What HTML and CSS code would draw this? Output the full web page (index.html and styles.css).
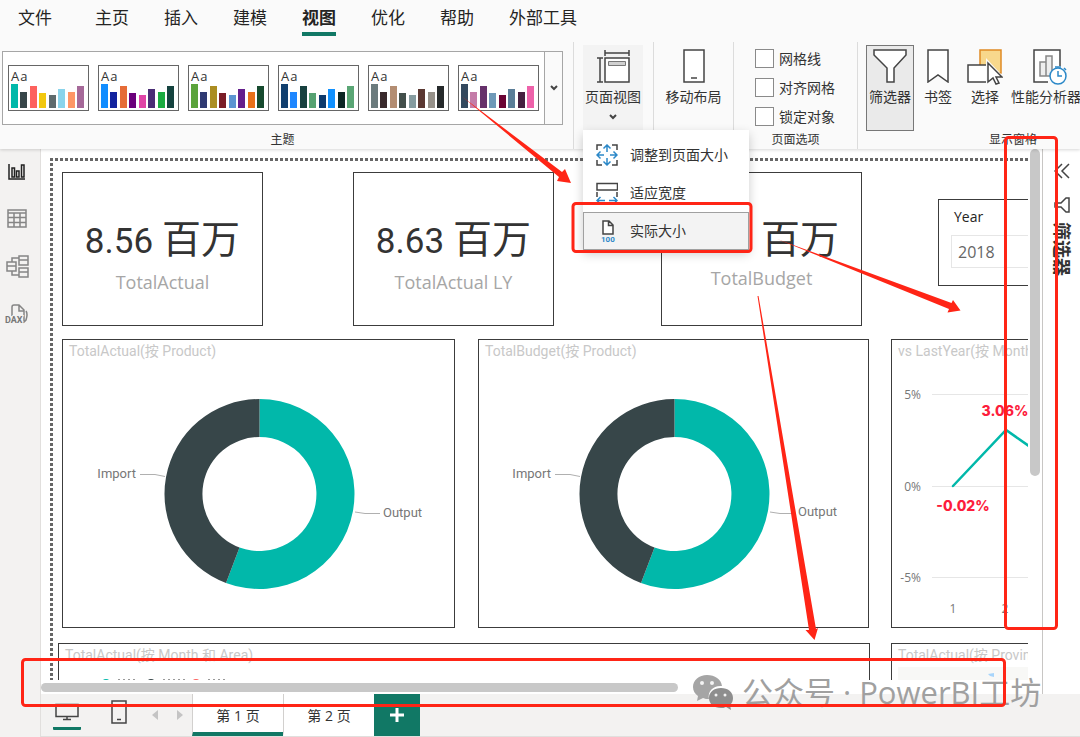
FILE: index.html
```html
<!DOCTYPE html>
<html lang="zh-CN">
<head>
<meta charset="utf-8">
<title>报表视图</title>
<link rel="stylesheet" href="styles.css">
</head>
<body>
<div class="app">
  <header class="top">
    <nav class="tabs">
      <a class="tab tab-file" href="#">文件</a>
      <a class="tab" href="#">主页</a>
      <a class="tab" href="#">插入</a>
      <a class="tab" href="#">建模</a>
      <a class="tab tab-active" href="#">视图</a>
      <a class="tab" href="#">优化</a>
      <a class="tab" href="#">帮助</a>
      <a class="tab" href="#">外部工具</a>
    </nav>

    <div class="ribbon">
      <section class="group group-themes">
        <div class="group-body">
          <div class="gallery">
            <button class="theme" aria-label="主题 1"><span class="aa">Aa</span>
              <svg class="bars" viewBox="0 0 75 24"><path fill="#01b8aa" d="M0 0h7v24H0z"/><path fill="#374649" d="M9 8h7v16H9z"/><path fill="#fd625e" d="M19 2h7v22h-7z"/><path fill="#f2c80f" d="M28 9h7v15h-7z"/><path fill="#5f6b6d" d="M38 11h7v13h-7z"/><path fill="#8ad4eb" d="M47 5h7v19h-7z"/><path fill="#fe9666" d="M57 8h7v16h-7z"/><path fill="#a66999" d="M66 2h7v22h-7z"/></svg></button>
            <button class="theme" aria-label="主题 2"><span class="aa">Aa</span>
              <svg class="bars" viewBox="0 0 75 24"><path fill="#118dff" d="M0 0h7v24H0z"/><path fill="#12239e" d="M9 8h7v16H9z"/><path fill="#e66c37" d="M19 2h7v22h-7z"/><path fill="#6b007b" d="M28 9h7v15h-7z"/><path fill="#e044a7" d="M38 11h7v13h-7z"/><path fill="#4a2d75" d="M47 5h7v19h-7z"/><path fill="#1aab40" d="M57 8h7v16h-7z"/><path fill="#15433f" d="M66 2h7v22h-7z"/></svg></button>
            <button class="theme" aria-label="主题 3"><span class="aa">Aa</span>
              <svg class="bars" viewBox="0 0 75 24"><path fill="#5ba33b" d="M0 0h7v24H0z"/><path fill="#2f3a72" d="M9 8h7v16H9z"/><path fill="#ab8d22" d="M19 2h7v22h-7z"/><path fill="#7a1d27" d="M28 9h7v15h-7z"/><path fill="#5c95d1" d="M38 11h7v13h-7z"/><path fill="#641e8c" d="M47 5h7v19h-7z"/><path fill="#e8701a" d="M57 8h7v16h-7z"/><path fill="#164a2e" d="M66 2h7v22h-7z"/></svg></button>
            <button class="theme" aria-label="主题 4"><span class="aa">Aa</span>
              <svg class="bars" viewBox="0 0 75 24"><path fill="#113f6e" d="M0 0h7v24H0z"/><path fill="#1f87ff" d="M9 8h7v16H9z"/><path fill="#17413f" d="M19 2h7v22h-7z"/><path fill="#56a272" d="M28 9h7v15h-7z"/><path fill="#0f3a6c" d="M38 11h7v13h-7z"/><path fill="#1191ff" d="M47 5h7v19h-7z"/><path fill="#0c2624" d="M57 8h7v16h-7z"/><path fill="#5aa675" d="M66 2h7v22h-7z"/></svg></button>
            <button class="theme" aria-label="主题 5"><span class="aa">Aa</span>
              <svg class="bars" viewBox="0 0 75 24"><path fill="#6b7b7d" d="M0 0h7v24H0z"/><path fill="#3a2a2c" d="M9 8h7v16H9z"/><path fill="#b38d72" d="M19 2h7v22h-7z"/><path fill="#434f4b" d="M28 9h7v15h-7z"/><path fill="#869ca0" d="M38 11h7v13h-7z"/><path fill="#5b3832" d="M47 5h7v19h-7z"/><path fill="#96918a" d="M57 8h7v16h-7z"/><path fill="#262a2b" d="M66 2h7v22h-7z"/></svg></button>
            <button class="theme" aria-label="主题 6"><span class="aa">Aa</span>
              <svg class="bars" viewBox="0 0 75 24"><path fill="#34495e" d="M0 0h7v24H0z"/><path fill="#c47ca8" d="M9 8h7v16H9z"/><path fill="#66316b" d="M19 2h7v22h-7z"/><path fill="#6f99b8" d="M28 9h7v15h-7z"/><path fill="#6a0434" d="M38 11h7v13h-7z"/><path fill="#5b7e98" d="M47 5h7v19h-7z"/><path fill="#46203f" d="M57 8h7v16h-7z"/><path fill="#ee62aa" d="M66 2h7v22h-7z"/></svg></button>
            <button class="gallery-more" aria-label="更多主题"><svg width="8" height="6" viewBox="0 0 8 6"><path class="ln ln2" d="M1 1l3 3 3-3"/></svg></button>
          </div>
        </div>
        <div class="group-label">主题</div>
      </section>

      <section class="group group-small">
        <div class="group-body">
          <button class="tool tool-open">
            <svg class="tool-icon" width="34" height="34" viewBox="0 0 34 34"><path class="ln" d="M9 1v6M33 1v6M9 4h24M1 9h6M1 33h6M4 9v24"/><path class="ln" fill="#fff" d="M9 9h24v24H9z"/><path fill="#d0d0d0" stroke="#777" d="M12.500 12.500h17v4h-17z"/></svg>
            <span>页面视图</span>
            <svg class="tool-caret" width="8" height="6" viewBox="0 0 8 6"><path class="ln ln2" d="M1 1l3 3 3-3"/></svg>
          </button>
          <div class="menu" role="menu">
            <button class="menu-item" role="menuitem">
              <svg width="22" height="22" viewBox="0 0 22 22"><path class="ln" d="M1 6V1h5M16 1h5v5M21 16v5h-5M6 21H1v-5"/><path class="bl" d="M11 1v7M7.500 4.500L11 1l3.500 3.500M11 21v-7M7.500 17.500L11 21l3.500-3.500M1 11h7M4.500 7.500L1 11l3.500 3.500M21 11h-7M17.500 7.500L21 11l-3.500 3.500"/></svg>
              <span>调整到页面大小</span></button>
            <button class="menu-item" role="menuitem">
              <svg width="22" height="22" viewBox="0 0 22 22"><path class="ln" fill="#fff" d="M1 1.500h20.500v6.500H1zM1 10v5M21 10v5"/><path class="bl" d="M1 18.500h8M4.500 15L1 18.500 4.500 22M21 18.500h-8M17.500 15l3.500 3.500-3.500 3.500"/></svg>
              <span>适应宽度</span></button>
            <button class="menu-item menu-item-on" role="menuitem">
              <svg width="22" height="24" viewBox="0 0 22 24"><path class="ln" fill="#fff" d="M7 15V2h6l4 4v9zM12.500 2v4.500H17"/><text class="pct" x="5" y="23">100</text></svg>
              <span>实际大小</span></button>
          </div>
        </div>
        <div class="group-label"></div>
      </section>

      <section class="group group-small">
        <div class="group-body">
          <button class="tool">
            <svg class="tool-icon" width="22" height="34" viewBox="0 0 22 34"><path class="ln" fill="#fff" d="M1 1h20v32H1z"/><path class="ln" d="M8 29h6"/></svg>
            <span>移动布局</span>
          </button>
        </div>
        <div class="group-label"></div>
      </section>

      <section class="group group-options">
        <div class="group-body checks">
          <label class="check"><input type="checkbox"><span>网格线</span></label>
          <label class="check"><input type="checkbox"><span>对齐网格</span></label>
          <label class="check"><input type="checkbox"><span>锁定对象</span></label>
        </div>
        <div class="group-label">页面选项</div>
      </section>

      <section class="group group-panes">
        <div class="panes-inner">
          <div class="group-body panes-tools">
            <button class="tool tool-on">
              <svg class="tool-icon" width="34" height="34" viewBox="0 0 34 34"><path class="ln" fill="#fff" d="M1 1h32v5L21 19v14h-7V19L1 6z"/></svg>
              <span>筛选器</span></button>
            <button class="tool">
              <svg class="tool-icon" width="22" height="34" viewBox="0 0 22 34"><path class="ln" fill="#fff" d="M1 1h20v32l-10-7-10 7z"/></svg>
              <span>书签</span></button>
            <button class="tool">
              <svg class="tool-icon" width="36" height="36" viewBox="0 0 36 36"><path fill="#f8d88c" stroke="#e08a24" stroke-width="1.500" d="M13 1h21v23H13z"/><path class="ln" fill="#fff" d="M1 16h21v17H1z"/><path fill="#fff" stroke="#fafafa" stroke-width="4" d="M21 14v20l5-4 3 6 3-1-3-6h6z"/><path class="ln" fill="#fff" d="M21 14v19l5-4 3 6 3-1-3-6h6z"/></svg>
              <span>选择</span></button>
            <button class="tool">
              <svg class="tool-icon" width="42" height="36" viewBox="-8 0 42 36"><path class="ln" fill="#fff" d="M15 33H1V1h26v16"/><path fill="#eee" stroke="#888" stroke-width="1.500" d="M7 13h6v14H7zM13 7h6v20h-6z"/><circle class="bl" fill="#fff" cx="25" cy="27" r="8"/><path class="bl" d="M25 22v5h4M22 18h6M31 19l2 2"/></svg>
              <span>性能分析器</span></button>
          </div>
          <div class="group-label">显示窗格</div>
        </div>
      </section>
    </div>
  </header>

  <aside class="rail">
    <button class="rail-btn" aria-label="报表"><svg width="20" height="20" viewBox="0 0 20 20"><path fill="none" stroke="#222" stroke-width="1.500" d="M2 2v15h16M5 6h2.500v9H5zM9.500 9H12v6H9.500zM14.500 3H17v12h-2.500z"/></svg></button>
    <button class="rail-btn" aria-label="数据"><svg width="20" height="20" viewBox="0 0 20 20"><path fill="none" stroke="#858585" stroke-width="1.500" d="M1 1h18v17H1zM1 4h18M1 8.500h18M1 13.500h18M7 4v14M13 4v14"/></svg></button>
    <button class="rail-btn" aria-label="模型"><svg width="24" height="24" viewBox="0 0 24 24"><path fill="none" stroke="#858585" stroke-width="1.500" d="M2 7h9v9H2zM2 11h9M14 1h9v9h-9zM14 5h9M14 13h9v9h-9zM14 17h9M7 7V3h7M7 16v4h7"/></svg></button>
    <button class="rail-btn" aria-label="DAX"><svg width="24" height="22" viewBox="0 0 24 22"><path fill="none" stroke="#858585" stroke-width="1.500" d="M7 12V3q0-2 2-2h5l5 5v11M14 1v6h5M21 7q2 3 0 9l-3 3"/><text class="dax" x="0" y="19">DAX</text></svg></button>
  </aside>

  <main class="canvas">
    <div class="viewport">
      <div class="page">
        <div class="row row-kpi">
          <div class="card kpi"><div class="kpi-value"><span class="num">8.56</span><span>百万</span></div><div class="kpi-name">TotalActual</div></div>
          <div class="card kpi kpi-second"><div class="kpi-value"><span class="num">8.63</span><span>百万</span></div><div class="kpi-name">TotalActual LY</div></div>
          <div class="card kpi kpi-third"><div class="kpi-value kpi-unit"><span>百万</span></div><div class="kpi-name">TotalBudget</div></div>
          <div class="card slicer"><label for="year">Year</label><input id="year" type="text" value="2018"></div>
        </div>

        <div class="row row-charts">
          <div class="card chart">
            <h2 class="chart-title">TotalActual(按 Product)</h2>
            <svg class="plot" width="391" height="264" viewBox="0 0 391 264">
              <path fill="#01b8aa" d="M196.500 36a95 95 0 1 1-33.500 183.900l13.500-35.500a57 57 0 1 0 20-110.400z"/>
              <path fill="#374649" d="M196.500 36a95 95 0 0 0-33.500 183.900l13.500-35.500a57 57 0 0 1 20-110.400z"/>
              <path class="leader" d="M77 111.500h15l10 2M292 149l10 1.500h15"/>
              <text class="slice" x="73" y="115" text-anchor="end">Import</text><text class="slice" x="320" y="154">Output</text>
            </svg>
          </div>
          <div class="card chart chart-mid">
            <h2 class="chart-title">TotalBudget(按 Product)</h2>
            <svg class="plot" width="389" height="264" viewBox="0 0 389 264">
              <path fill="#01b8aa" d="M195.500 36a95 95 0 1 1-33.500 183.900l13.500-35.500a57 57 0 1 0 20-110.400z"/>
              <path fill="#374649" d="M195.500 36a95 95 0 0 0-33.500 183.900l13.500-35.500a57 57 0 0 1 20-110.400z"/>
              <path class="leader" d="M76 111.500h15l10 2M291 149l10 1.500h15"/>
              <text class="slice" x="72" y="115" text-anchor="end">Import</text><text class="slice" x="319" y="153">Output</text>
            </svg>
          </div>
          <div class="card chart">
            <h2 class="chart-title">vs LastYear(按 Month)</h2>
            <svg class="plot" width="391" height="264" viewBox="0 0 391 264">
              <path class="gridline" d="M40 31.500h340M40 123.500h340M40 214.500h340"/>
              <g class="axis"><text x="29" y="36" text-anchor="end">5%</text><text x="29" y="128" text-anchor="end">0%</text><text x="29" y="219" text-anchor="end">-5%</text><text x="61" y="250" text-anchor="middle">1</text><text x="113" y="250" text-anchor="middle">2</text></g>
              <path fill="none" stroke="#01b8aa" stroke-width="2.500" stroke-linecap="round" d="M61 123l53-56 40 28"/>
              <g class="datum"><text x="113" y="53" text-anchor="middle">3.06%</text><text x="71" y="148" text-anchor="middle">-0.02%</text></g>
            </svg>
          </div>
        </div>

        <div class="row row-last">
          <div class="card chart wide">
            <h2 class="chart-title">TotalActual(按 Month 和 Area)</h2>
            <svg class="plot" width="300" height="24" viewBox="0 0 300 24"><circle cx="47" cy="16" r="4" fill="#01b8aa"/><circle cx="92" cy="16" r="4" fill="#374649"/><circle cx="137" cy="16" r="4" fill="#fd625e"/><path stroke="#999" stroke-dasharray="2 3" d="M59 12.500h20M104 12.500h24M149 12.500h17"/></svg>
          </div>
          <div class="card chart">
            <h2 class="chart-title">TotalActual(按 Province)</h2>
            <svg class="plot map" width="380" height="24" viewBox="0 0 380 24"><path fill="#f8f8f6" d="M0 0h380v24H0z"/><path fill="#a8d5fb" d="M90 7l6-1v4l-4-1z"/></svg>
          </div>
        </div>
      </div>
    </div>
    <div class="vbar"><div class="vthumb"></div></div>
    <div class="hbar"><div class="hthumb"></div></div>
  </main>

  <aside class="filters">
    <button class="filters-open" aria-label="展开"><svg width="16" height="16" viewBox="0 0 16 16"><path class="ln" d="M8 1L1 8l7 7M15 1L8 8l7 7"/></svg></button>
    <svg width="16" height="16" viewBox="0 0 16 16"><path class="ln" d="M15 1v14h-3L7 10H1V6h6l5-5z"/></svg>
    <span class="filters-title">筛选器</span>
  </aside>

  <footer class="pages">
    <button class="view view-on" aria-label="桌面布局"><svg width="24" height="18" viewBox="0 0 24 18"><path class="ln" d="M1 1.500h22v12H1zM12 14v3M8 16.500h8"/></svg></button>
    <button class="view view-phone" aria-label="移动布局"><svg width="16" height="24" viewBox="0 0 16 24"><path class="ln" d="M1 1h14v22H1zM6 19.500h4"/></svg></button>
    <button class="step" aria-label="上一页"><svg width="6" height="10" viewBox="0 0 6 10"><path fill="#c4c4c4" d="M6 0v10L0 5z"/></svg></button>
    <button class="step" aria-label="下一页"><svg width="6" height="10" viewBox="0 0 6 10"><path fill="#c4c4c4" d="M0 0v10l6-5z"/></svg></button>
    <button class="page-tab page-tab-on">第 1 页</button>
    <button class="page-tab">第 2 页</button>
    <button class="page-add" aria-label="新建页"><svg width="14" height="14" viewBox="0 0 14 14"><path stroke="#fff" stroke-width="3" d="M7 0v14M0 7h14"/></svg></button>
  </footer>

  <div class="watermark">
    <svg width="42" height="36" viewBox="0 0 42 36"><path fill="#a5a5a5" d="M15 1C7 1 1 6 1 13c0 4 2 7 5 9l-1 5 6-3c2 1 4 1 6 1-2-8 5-14 13-13C29 5 23 1 15 1z"/><path fill="#8e8e8e" d="M29 14c-7 0-12 4-12 10s5 10 12 10c2 0 3 0 5-1l5 3-1-5c2-2 3-4 3-7 0-6-5-10-12-10z"/><g fill="#f4f4f4"><circle cx="10" cy="9" r="2"/><circle cx="20" cy="9" r="2"/><circle cx="24" cy="21" r="1.500"/><circle cx="33" cy="21" r="1.500"/></g></svg>
    <span>公众号</span><span>·</span><span>PowerBI工坊</span>
  </div>

  <svg class="marks" width="1080" height="737" viewBox="0 0 1080 737">
    <g fill="none" stroke="#ff2516" stroke-width="3">
      <rect x="573" y="203.500" width="178" height="48" rx="3"/>
      <rect x="1005.500" y="137.500" width="51" height="491" rx="3"/>
      <rect x="22.500" y="659.500" width="982" height="46" rx="3"/>
    </g>
    <g fill="#ff2516">
      <path d="M462 96.500L562 172l3-3 6 14-14-2 2-4z"/>
      <path d="M777 239l174.500 64 1.500-3 7.500 10.500-13 2 1.500-3.500z"/>
      <path d="M757.500 296h1L816 629l2-1-3.500 12-9-10h3.500z"/>
    </g>
  </svg>
</div>
</body>
</html>
```
FILE: styles.css
```css
* { box-sizing: border-box; }
body {
  margin: 0;
  font-family: "Open Sans", "Noto Sans CJK SC", sans-serif;
  color: #333;
  background: #fff;
}
button { margin: 0; padding: 0; border: 0; background: none; font: inherit; color: inherit; }
svg { display: block; flex: none; }
.ln { stroke: #444; stroke-width: 1.5px; fill: none; }
.ln[fill="#fff"], .bl[fill="#fff"] { fill: #fff; }
.ln2 { stroke-width: 2px; }
.bl { stroke: #2b88c8; stroke-width: 1.5px; fill: none; }

.app {
  position: relative;
  display: grid;
  grid-template: auto minmax(0, 1fr) 43px / 41px minmax(0, 1fr) 38px;
  height: 100vh;
  overflow: hidden;
}

.top {
  position: relative;
  z-index: 2;
  grid-column: 1 / -1;
  background: #fafafa;
  box-shadow: 0 1px 3px rgba(0, 0, 0, .16);
}
.tabs { display: flex; gap: 35px; height: 42px; padding: 6px 0 0 18px; }
.tab { height: 30px; font-size: 17px; line-height: 24px; color: #252423; text-decoration: none; white-space: nowrap; }
.tab-file { margin-right: 8px; }
.tab-active { font-weight: 700; border-bottom: 4px solid #117865; }

.ribbon { display: flex; font-size: 14px; }
.group { flex: none; padding-top: 3px; border-right: 1px solid #dcdcdc; }
.group-body { position: relative; height: 86px; }
.group-label { height: 18px; font-size: 12px; line-height: 18px; text-align: center; }
.group-themes { width: 574px; padding-right: 8px; }
.group-themes .group-body { padding: 6px 0 0 2px; }
.gallery { display: flex; gap: 9px; width: 561px; height: 74px; padding: 13px 0 0 5px; border: 1px solid #a6a6a6; background: #fff; }
.theme { width: 81px; height: 46px; padding: 2px; border: 1px solid #666; background: #fff; text-align: left; }
.aa { display: block; height: 15px; font-size: 13px; line-height: 14px; letter-spacing: 1px; }
.bars { width: 75px; height: 24px; }
.gallery-more { display: grid; place-items: center; flex: 1; height: 72px; margin: -13px 0 0 -4px; border-left: 1px solid #a6a6a6; background: #fafafa; }

.group-small { width: 80px; }
.group-small:nth-child(2) .tool { width: 60px; margin-left: 9px; }
.tool { display: flex; flex-direction: column; align-items: center; width: 100%; height: 86px; padding-top: 4px; white-space: nowrap; }
.tool span { margin-top: auto; line-height: 20px; margin-bottom: 24px; }
.tool-open { background: #f3f3f3; }
.tool-open span { margin-bottom: 7px; }
.tool-caret { margin-bottom: 11px; }
.tool-on { background: #eaeaea; outline: 1px solid #777; outline-offset: -1px; }

.menu { position: absolute; z-index: 5; top: 85px; left: 9px; width: 166px; padding-top: 6px; background: #fff; box-shadow: 0 4px 10px rgba(0, 0, 0, .2); }
.menu-item { display: flex; align-items: center; gap: 12px; width: 100%; height: 38px; padding-left: 12px; white-space: nowrap; border: 1px solid transparent; }
.menu-item span { padding-bottom: 2px; }
.menu-item-on { background: #f3f3f3; border-color: #a0a0a0; }
.pct { font: 700 8px "Roboto", sans-serif; fill: #2b88c8; }

.group-options { width: 124px; }
.checks { display: flex; flex-direction: column; gap: 9px; padding: 3px 0 0 21px; }
.check { display: flex; align-items: center; gap: 5px; height: 20px; white-space: nowrap; }
.check input { appearance: none; width: 19px; height: 19px; margin: 0; border: 1px solid #8a8a8a; background: #fff; }
.group-panes { flex: 1; min-width: 0; border: 0; overflow: hidden; }
.panes-inner { width: 310px; }
.panes-tools { display: grid; grid-template-columns: 48px 48px 46px 76px; padding-left: 8px; }

.rail { grid-row: 2 / 4; display: flex; flex-direction: column; background: #f3f2f1; border-right: 1px solid #e1dfdd; }
.rail-btn { display: grid; place-items: center; width: 34px; height: 48px; }
.rail-btn:first-child { height: 46px; }
.dax { font: 700 9px "Roboto", sans-serif; fill: #777; stroke: #f3f2f1; stroke-width: 2px; paint-order: stroke; }

.canvas { display: grid; grid-template: minmax(0, 1fr) 14px / minmax(0, 1fr) 14px; }
.viewport { overflow: hidden; padding: 9px 0 0 9px; }
.page {
  width: 1280px;
  height: 720px;
  padding: 14px 0 0 8px;
  background:
    repeating-linear-gradient(90deg, #666 0 3px, transparent 3px 5px) 0 0 / 100% 3px no-repeat,
    repeating-linear-gradient(#666 0 3px, transparent 3px 5px) 0 0 / 3px 100% no-repeat;
}
.row { display: flex; align-items: flex-start; padding-left: 4px; }
.card { flex: none; border: 1px solid #3c3c3c; }
.row-kpi { height: 167px; }
.kpi { width: 201px; height: 154px; padding-top: 37px; text-align: center; white-space: nowrap; }
.kpi-second { margin-left: 90px; }
.kpi-third { margin-left: 107px; }
.kpi-value { display: flex; justify-content: center; align-items: baseline; gap: 9px; font-size: 39px; line-height: 56px; }
.kpi-unit { justify-content: flex-end; padding-right: 22px; }
.num { font-family: "Roboto", sans-serif; font-size: 35px; }
.kpi-name { font-size: 18px; line-height: 24px; color: #a6a6a6; }
.slicer { width: 220px; height: 87px; margin: 27px 0 0 76px; padding: 6px 0 0 12px; font-size: 14px; }
.slicer label { display: block; padding-left: 3px; line-height: 22px; color: #252423; }
.slicer input { display: block; width: 190px; height: 33px; margin-top: 7px; padding: 0 6px; border: 1px solid #e6e6e6; font: 16px "Open Sans", sans-serif; color: #666; }

.row-charts { height: 304px; gap: 22px; }
.chart { width: 393px; height: 289px; }
.row-charts .chart-mid { width: 391px; margin-left: 1px; }
.chart-title { margin: 0; padding: 1px 0 2px 6px; font: 400 14px/20px "Roboto", "Noto Sans CJK SC", sans-serif; color: #c8c8c8; white-space: nowrap; }
.slice { font: 13px "Roboto", sans-serif; fill: #777; }
.leader { fill: none; stroke: #b0b0b0; }
.gridline { stroke: #e6e6e6; }
.axis { font-size: 12px; fill: #777; }
.datum { font: 800 14px "Inter", sans-serif; fill: #fd1d3c; }
.row-last { gap: 21px; padding-left: 0; }
.row-last .wide { width: 812px; }
.map { margin-left: 6px; }

.vbar { padding-left: 2px; }
.vthumb { width: 10px; height: 61.5%; border-radius: 5px; background: #c8c8c8; }
.hbar { grid-column: 1 / -1; padding-top: 3px; }
.hthumb { width: 63.6%; height: 9px; border-radius: 5px; background: #c8c8c8; }

.filters { display: flex; flex-direction: column; align-items: center; gap: 18px; padding: 14px 0 0; border-left: 1px solid #c8c6c4; }
.filters-title { writing-mode: vertical-rl; text-orientation: sideways; margin-top: -9px; font-size: 18px; line-height: 24px; font-weight: 700; }

.pages { grid-column: 2 / -1; display: flex; align-items: stretch; background: #f3f2f1; border-bottom: 1px solid #e1dfdd; font-size: 14px; }
.view { display: grid; place-items: center; width: 28px; margin-left: 12px; }
.view-phone { margin: 0 9px 0 24px; padding-bottom: 6px; }
.view-on { margin-bottom: 6px; padding-top: 2px; border-bottom: 3px solid #117865; border-radius: 1px; }
.step { display: grid; place-items: center; width: 25px; }
.page-tab { width: 91px; padding-top: 3px; background: #fff; border-left: 1px solid #d2d0ce; border-bottom: 4px solid #fff; }
.page-tab-on { border-bottom-color: #117865; }
.page-add { display: grid; place-items: center; width: 46px; background: #117865; }

.watermark { position: absolute; z-index: 3; left: 692px; top: 670px; display: flex; align-items: center; gap: 8px; font-size: 31px; line-height: 44px; color: #a0a0a0; white-space: nowrap; }
.marks { position: absolute; z-index: 4; left: 0; top: 0; pointer-events: none; }
```
